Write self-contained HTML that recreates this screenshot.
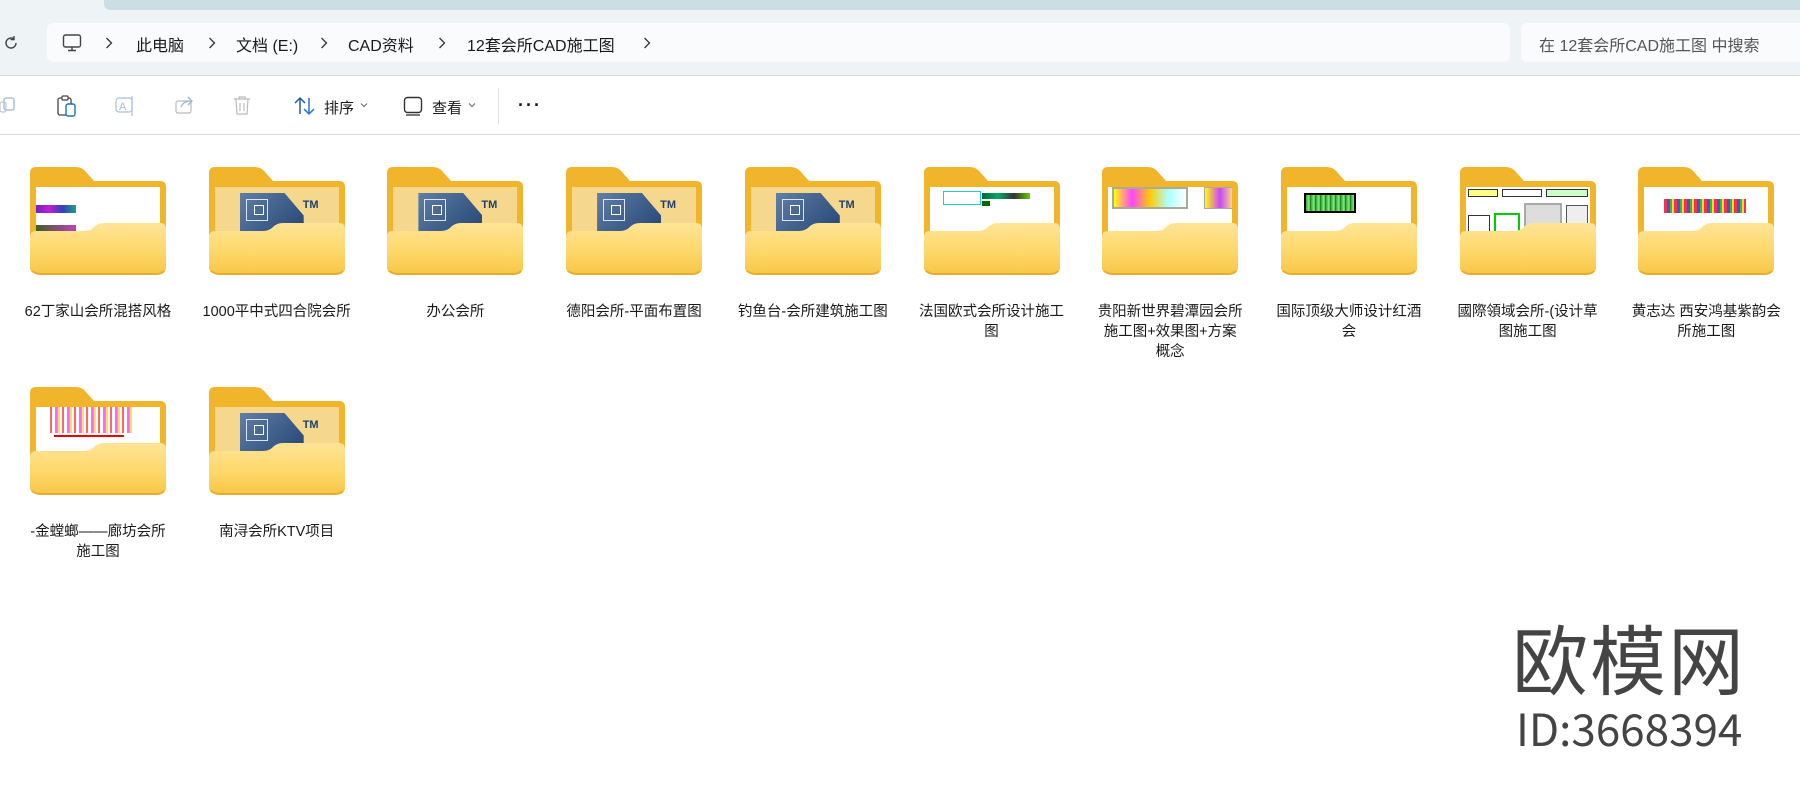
<!DOCTYPE html>
<html><head><meta charset="utf-8"><style>
*{margin:0;padding:0;box-sizing:border-box}
body{width:1800px;height:803px;overflow:hidden;background:#fff;font-family:"Liberation Sans","Noto Sans CJK SC",sans-serif;color:#1a1a1a;position:relative}
.abs{position:absolute}
.top{left:0;top:0;width:1800px;height:76px;background:#eef3f6;border-bottom:1px solid #d5dbdf}
.strip{left:104px;top:0;width:1700px;height:10px;background:#cddde4;border-radius:0 0 0 6px}
.addr{left:47px;top:23px;width:1463px;height:39px;background:#f9fbfc;border-radius:6px}
.search{left:1521px;top:23px;width:290px;height:39px;background:#f9fbfc;border-radius:6px}
.t{font-size:16px;top:32px;white-space:nowrap}
.chev{top:36px}
.tb{left:0;top:76px;width:1800px;height:59px;background:#fff;border-bottom:1px solid #d5dbdf}
.f{position:absolute;width:136px;height:108px}
.back{position:absolute;left:0;top:0;width:136px;height:106px}
.paper{position:absolute;left:6px;top:20px;width:124px;height:60px;background:#fff;overflow:hidden}
.lab{position:absolute;width:152px;text-align:center;font-size:14.5px;line-height:20px;color:#1a1a1a}
.cad{position:absolute;left:25px;top:6px;width:64px;height:50px;background:linear-gradient(135deg,#5f7fa8,#1f3f6e);clip-path:polygon(0 0,70% 0,100% 45%,100% 100%,0 100%)}
.tm{position:absolute;left:88px;top:12px;font-size:11px;font-weight:bold;color:#1f3f6e}
.wm{color:#444;font-family:"Noto Sans CJK SC",sans-serif}
</style></head><body>
<div class="abs top"></div>
<div class="abs strip"></div>
<div class="abs addr"></div>
<div class="abs search"></div>
<svg class="abs" style="left:2px;top:34px" width="18" height="18" viewBox="0 0 18 18"><path d="M14 9a5 5 0 1 1-2-4" fill="none" stroke="#444" stroke-width="1.4"/><path d="M12 2v3.5h-3.5" fill="none" stroke="#444" stroke-width="1.4"/></svg>
<svg class="abs" style="left:62px;top:33px" width="20" height="20" viewBox="0 0 20 20"><rect x="1.5" y="2" width="17" height="12" rx="2" fill="none" stroke="#444" stroke-width="1.4"/><path d="M10 14v3M6 17.5h8" stroke="#444" stroke-width="1.4"/></svg>
<svg class="abs chev" style="left:105px" width="8" height="14" viewBox="0 0 8 14"><path d="M1.5 2l5 5-5 5" fill="none" stroke="#333" stroke-width="1.3"/></svg>
<div class="abs t" style="left:136px">此电脑</div>
<svg class="abs chev" style="left:208px" width="8" height="14" viewBox="0 0 8 14"><path d="M1.5 2l5 5-5 5" fill="none" stroke="#333" stroke-width="1.3"/></svg>
<div class="abs t" style="left:236px">文档 (E:)</div>
<svg class="abs chev" style="left:320px" width="8" height="14" viewBox="0 0 8 14"><path d="M1.5 2l5 5-5 5" fill="none" stroke="#333" stroke-width="1.3"/></svg>
<div class="abs t" style="left:348px">CAD资料</div>
<svg class="abs chev" style="left:438px" width="8" height="14" viewBox="0 0 8 14"><path d="M1.5 2l5 5-5 5" fill="none" stroke="#333" stroke-width="1.3"/></svg>
<div class="abs t" style="left:467px">12套会所CAD施工图</div>
<svg class="abs chev" style="left:643px" width="8" height="14" viewBox="0 0 8 14"><path d="M1.5 2l5 5-5 5" fill="none" stroke="#333" stroke-width="1.3"/></svg>
<div class="abs t" style="left:1539px;color:#555">在 12套会所CAD施工图 中搜索</div>
<div class="abs tb"></div>
<svg class="abs" style="left:0;top:96px" width="18" height="20" viewBox="0 0 18 20"><rect x="4" y="2" width="10" height="12" rx="2" fill="none" stroke="#9fb7d2" stroke-width="1.3"/><rect x="0" y="6" width="6" height="10" rx="2" fill="none" stroke="#c0c8d0" stroke-width="1.3"/></svg>
<svg class="abs" style="left:57px;top:95px" width="20" height="22" viewBox="0 0 20 22"><rect x="1" y="3" width="13" height="17" rx="2" fill="none" stroke="#444" stroke-width="1.3"/><rect x="5" y="1" width="6" height="4" rx="1" fill="#fff" stroke="#444" stroke-width="1.2"/><rect x="9" y="9" width="9" height="12" rx="2" fill="#fff" stroke="#1f6fc2" stroke-width="1.4"/></svg>
<svg class="abs" style="left:115px;top:95px" width="22" height="22" viewBox="0 0 22 22"><rect x="1" y="3" width="16" height="14" rx="3" fill="none" stroke="#a8c0dc" stroke-width="1.2"/><text x="4" y="15" font-size="11" fill="#a8c0dc" font-family="Liberation Sans">A</text><path d="M17 1v20" stroke="#a8c0dc" stroke-width="1.2"/></svg>
<svg class="abs" style="left:175px;top:95px" width="20" height="20" viewBox="0 0 20 20"><rect x="1" y="6" width="15" height="12" rx="2" fill="none" stroke="#bbb" stroke-width="1.2"/><path d="M6 12c2-5 6-6 11-6M13 2l4 4-4 4" fill="none" stroke="#9fb7d2" stroke-width="1.3"/></svg>
<svg class="abs" style="left:233px;top:95px" width="18" height="20" viewBox="0 0 18 20"><path d="M1 4h16M6 4V2h6v2M3 4l1 15h10l1-15M7 8v8M11 8v8" fill="none" stroke="#bbb" stroke-width="1.2"/></svg>
<svg class="abs" style="left:294px;top:96px" width="22" height="20" viewBox="0 0 22 20"><path d="M6 18V2M1 7l5-5 5 5" fill="none" stroke="#1a5fa8" stroke-width="1.5"/><path d="M15 2v16M10 13l5 5 5-5" fill="none" stroke="#1f78d0" stroke-width="1.5"/></svg>
<div class="abs" style="left:324px;top:97px;font-size:15px">排序</div>
<svg class="abs" style="left:360px;top:102px" width="8" height="6" viewBox="0 0 8 6"><path d="M1 1.5l3 3 3-3" fill="none" stroke="#666" stroke-width="1"/></svg>
<svg class="abs" style="left:403px;top:96px" width="20" height="20" viewBox="0 0 20 20"><rect x="1.5" y="1.5" width="17" height="15" rx="3" fill="none" stroke="#333" stroke-width="1.4"/><path d="M3 19h14" stroke="#333" stroke-width="1.3"/></svg>
<div class="abs" style="left:432px;top:97px;font-size:15px">查看</div>
<svg class="abs" style="left:468px;top:102px" width="8" height="6" viewBox="0 0 8 6"><path d="M1 1.5l3 3 3-3" fill="none" stroke="#666" stroke-width="1"/></svg>
<div class="abs" style="left:498px;top:88px;width:1px;height:36px;background:#e3e3e3"></div>
<div class="abs" style="left:518px;top:95px;font-size:18px;letter-spacing:2px;font-weight:bold">···</div>

<div class="abs wm" style="left:1512px;top:606px;font-size:76px;line-height:100px;letter-spacing:2px">欧模网</div>
<div class="abs" style="left:1516px;top:701px;font-size:44px;line-height:52px;color:#444;font-family:'Noto Sans CJK SC',sans-serif">ID:3668394</div>

<div id="g"></div>
<script>
const items=[
["62丁家山会所混搭风格","p1"],["1000平中式四合院会所","cad"],["办公会所","cad"],["德阳会所-平面布置图","cad"],["钓鱼台-会所建筑施工图","cad"],
["法国欧式会所设计施工<br>图","p2"],["贵阳新世界碧潭园会所<br>施工图+效果图+方案<br>概念","p3"],["国际顶级大师设计红酒<br>会","p4"],["國際領域会所-(设计草<br>图施工图","p5"],["黄志达 西安鸿基紫韵会<br>所施工图","p6"],
["-金螳螂——廊坊会所<br>施工图","p7"],["南浔会所KTV项目","cad"]];
const thumbs={
p1:'<div style="position:absolute;left:0;top:18px;width:40px;height:8px;background:linear-gradient(90deg,#7020c0,#c020d0,#3040c0,#20a080)"></div><div style="position:absolute;left:0;top:38px;width:40px;height:6px;background:linear-gradient(90deg,#406020,#c040c0)"></div>',
p2:'<div style="position:absolute;left:13px;top:4px;width:38px;height:14px;border:1px solid #2cc"></div><div style="position:absolute;left:52px;top:6px;width:48px;height:6px;background:linear-gradient(90deg,#063,#0a6,#333,#6c0)"></div><div style="position:absolute;left:52px;top:14px;width:8px;height:5px;background:#060"></div>',
p3:'<div style="position:absolute;left:4px;top:0;width:76px;height:22px;border:2px solid #aa9;background:linear-gradient(90deg,#ff0,#f4f,#fc0,#aff,#fff)"></div><div style="position:absolute;left:96px;top:0;width:32px;height:22px;border:1px solid #aaa;background:linear-gradient(90deg,#ff0,#c4f,#ff6)"></div>',
p4:'<div style="position:absolute;left:17px;top:6px;width:52px;height:20px;border:2px solid #000;background:repeating-linear-gradient(90deg,#3a3,#8e8 3px,#060 5px)"></div>',
p5:'<div style="position:absolute;left:2px;top:2px;width:30px;height:8px;border:1px solid #333;background:#ff8"></div><div style="position:absolute;left:36px;top:2px;width:40px;height:8px;border:1px solid #333"></div><div style="position:absolute;left:80px;top:2px;width:42px;height:8px;border:1px solid #333;background:#cfc"></div><div style="position:absolute;left:2px;top:28px;width:22px;height:30px;border:1px solid #333"></div><div style="position:absolute;left:28px;top:26px;width:26px;height:34px;border:2px solid #0c0"></div><div style="position:absolute;left:58px;top:16px;width:38px;height:44px;border:2px solid #aaa;background:#ddd"></div><div style="position:absolute;left:100px;top:18px;width:22px;height:40px;border:1px solid #555;background:#eee"></div>',
p6:'<div style="position:absolute;left:20px;top:12px;width:82px;height:14px;background:repeating-linear-gradient(90deg,#e02 0 3px,#22c 3px 6px,#0a0 6px 8px,#fc0 8px 10px);opacity:.8"></div>',
p7:'<div style="position:absolute;left:14px;top:0;width:82px;height:26px;background:repeating-linear-gradient(90deg,#f00 0 2px,#fff 2px 5px,#f0f 5px 7px,#0c0 7px 8px,#fc0 8px 10px,#fff 10px 12px);opacity:.6"></div><div style="position:absolute;left:18px;top:28px;width:70px;height:2px;background:#e00"></div>'
};
let h='';
items.forEach((it,i)=>{
 const col=i%10,row=Math.floor(i/10);
 const x=30+col*178.7,y=row?387:167;
 const cad=it[1]=='cad';
 h+=`<div class="f" style="left:${x}px;top:${y}px">
 <svg class="back" viewBox="0 0 136 106"><path d="M0 6Q0 0 6 0H46Q52 0 56 5L64 14H130Q136 14 136 20V100Q136 106 130 106H6Q0 106 0 100Z" fill="#f1b52c"/></svg>
 <div class="paper" style="background:${cad?'#f6d78e':'#fff'}">${cad?'<div class="cad"><div style="position:absolute;left:6px;top:6px;width:22px;height:22px;border:1.5px solid #dde6f0"></div><div style="position:absolute;left:14px;top:12px;width:10px;height:10px;border:1.5px solid #fff"></div></div><div class="tm">TM</div>':thumbs[it[1]]}</div>
 <svg style="position:absolute;left:0;top:56px" width="136" height="52" viewBox="0 0 136 52"><defs><linearGradient id="gg${i}" x1="0" y1="0" x2="0" y2="1"><stop offset="0" stop-color="#ffe497"/><stop offset=".6" stop-color="#fed768"/><stop offset="1" stop-color="#f8c748"/></linearGradient></defs><path d="M0 14Q0 8 6 8H54Q60 8 64 4Q68 0 74 0H130Q136 0 136 6V44Q136 50 130 50H6Q0 50 0 44Z" fill="url(#gg${i})"/><path d="M2 48Q6 51 10 51H126Q132 51 134 48" stroke="#e9ab2c" stroke-width="2" fill="none"/></svg>
 </div>`;
 h+=`<div class="lab" style="left:${x+68-76}px;top:${y+135}px;white-space:nowrap">${it[0]}</div>`;
});
document.getElementById('g').innerHTML=h;
</script>
</body></html>
